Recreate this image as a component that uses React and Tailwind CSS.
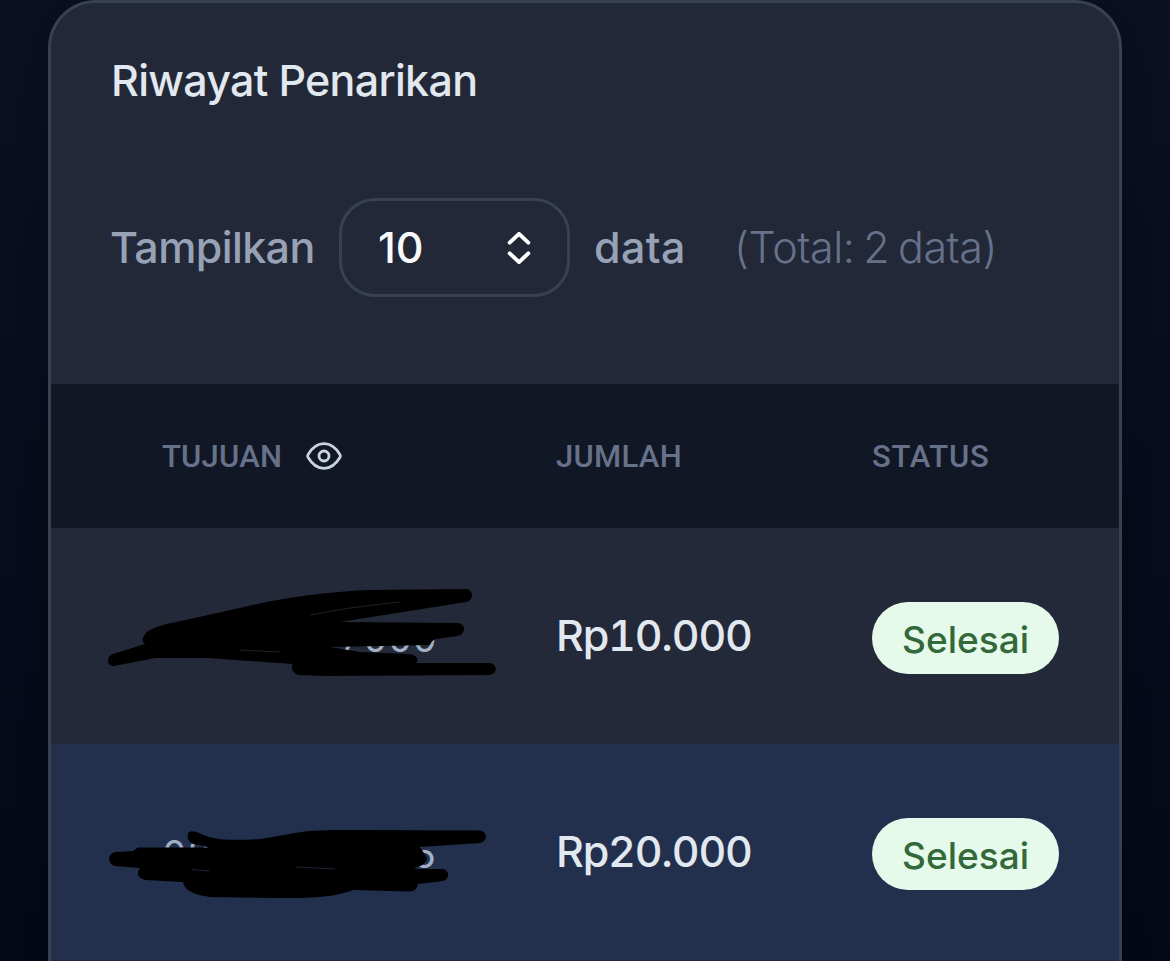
import React from 'react';

const ROWS = [
  {
    start: '0',
    end: '7000',
    amount: 'Rp10.000',
    status: 'Selesai',
    rowClass: 'bg-[#232938]',
    scribble: <FirstScribble />,
  },
  {
    start: '08',
    end: '5',
    amount: 'Rp20.000',
    status: 'Selesai',
    rowClass: 'bg-[#22304d]',
    scribble: <SecondScribble />,
  },
];

function EyeIcon() {
  return (
    <svg className="w-9 h-9 text-[#cbd5e1]" viewBox="0 0 36 36" fill="none" stroke="currentColor" strokeWidth="2.8" strokeLinejoin="round">
      <path d="M2.3 19.8Q1 18 2.3 16.2C6 10 11.2 5.6 18 5.6S30 10 33.7 16.2Q35 18 33.7 19.8C30 26 24.8 30.4 18 30.4S6 26 2.3 19.8Z" />
      <circle cx="18" cy="18" r="5" />
    </svg>
  );
}

function SelectArrows() {
  return (
    <svg className="w-6 h-8 text-white" viewBox="0 0 24 32" fill="none" stroke="currentColor" strokeWidth="4" strokeLinecap="round" strokeLinejoin="round">
      <path d="M2.7 10.6 12 1.9l9.3 8.7" />
      <path d="M2.7 21.4 12 30.1l9.3-8.7" />
    </svg>
  );
}

function FirstScribble() {
  return (
    <svg className="absolute left-[39px] top-[42px] w-[420px] h-[130px]" viewBox="0 0 420 130" fill="none">
      <path fill="#000" d="M54 66C56 61 62 58 77 54L150 38C190 28 235 22 278 20L376 19C384 20 384 30 376 32L250 52 367 53C377 54 376 64 367 66L346 69Q342 70 340 75L240 77 270 82 318 84C328 85 329 90 326 93L399 93C408 94 408 104 399 105L235 106 208 105C201 102 201 96 203 94L118 88H65L24 96C16 96 16 86 23 84L55 74C52 71 52 68 54 66Z" />
      <path stroke="#1d212b" strokeWidth="1" d="M220 45Q260 37 310 32M150 80 190 82" />
    </svg>
  );
}

function SecondScribble() {
  return (
    <svg className="absolute left-[39px] top-[66px] w-[420px] h-[110px]" viewBox="0 0 420 110" fill="none">
      <path fill="#000" d="M98 24C99 20 105 21 111 24 123 29 132 31 171 29L205 23C222 20 236 20 260 20L390 20.500C398 22 398 31 390 33L330 37 337 48C337 54 330 56 324 59L353 59C360 61 360 69 353 71L328 74C327 80 323 81.500 318 81.500L263 80C240 88 222 88 190 88L120 87C104 85 94 80 93 72L55 70C46 67 47 62 50 58L25 56C16 53 18 43 26 42L43 41 48 37.500 119 37.500 103 34C98 31 97 28 98 24Z" />
      <path stroke="#1d2536" strokeWidth="1" d="M102 59.500 119 61M206 57 245 59" />
    </svg>
  );
}

export default function App() {
  return (
    <div className="h-[961px] overflow-hidden bg-linear-to-b from-[#0b1022] to-[#040917] px-12 font-['Inter',sans-serif]">
      <div className="h-[1040px] rounded-t-[48px] border-[3px] border-[#374151] bg-[#222837] overflow-hidden shadow-[0_0_28px_rgba(0,0,0,0.25)]">
        <div className="h-[381px] px-[60px] pt-[50px]">
          <h2 className="h-[54px] text-[43px] leading-[54px] font-medium tracking-[-0.7px] text-[#e2e8f0] whitespace-nowrap">Riwayat Penarikan</h2>

          {/* Page size */}
          <div className="mt-[91px] flex h-[99px] items-center whitespace-nowrap text-[43px] font-medium text-[#98a2b7]">
            <span className="-ml-px w-[229px] tracking-[-0.6px]">Tampilkan</span>
            <button className="flex h-[99px] w-[231px] items-center justify-between rounded-[36px] border-[3px] border-[#374151] pl-9 pr-9 text-[#f8fafc]">
              <span className="tracking-[-0.2px]">10</span>
              <SelectArrows />
            </button>
            <span className="ml-6 w-[140px] tracking-[0.4px]">data</span>
            <span className="font-[350] tracking-[-0.4px] text-[#67728a] [word-spacing:-3px]">(Total: 2 data)</span>
          </div>
        </div>

        {/* Table head */}
        <div className="flex h-36 items-center bg-[#111725] text-[31px] font-medium text-[#67728a] font-['Roboto',sans-serif]">
          <div className="flex w-[505px] items-center pl-[111px]">
            <span className="w-36 pt-0.5 tracking-[0.2px]">TUJUAN</span>
            <EyeIcon />
          </div>
          <div className="w-[316px] pt-0.5 tracking-[0.3px]">JUMLAH</div>
          <div className="pt-0.5 tracking-[0.8px]">STATUS</div>
        </div>

        {ROWS.map((row) => (
          <div key={row.amount} className={`relative flex h-[216px] items-center ${row.rowClass}`}>
            <div className="w-[505px] pt-1 pl-[111px]">
              <div className="flex w-[275px] justify-between text-[38px] text-[#a3afc4] tabular-nums">
                <span>{row.start}</span>
                <span>{row.end}</span>
              </div>
            </div>
            <div className="w-[316px] pb-0.5 text-[43px] font-medium tracking-[-1.2px] text-[#e2e8f0] tabular-nums">{row.amount}</div>
            <div className="mt-1 flex h-[72px] w-[187px] items-center justify-center rounded-full bg-[#e5faea] pt-1 text-[37px] font-medium text-[#33683a]">{row.status}</div>
            {row.scribble}
          </div>
        ))}
      </div>
    </div>
  );
}
